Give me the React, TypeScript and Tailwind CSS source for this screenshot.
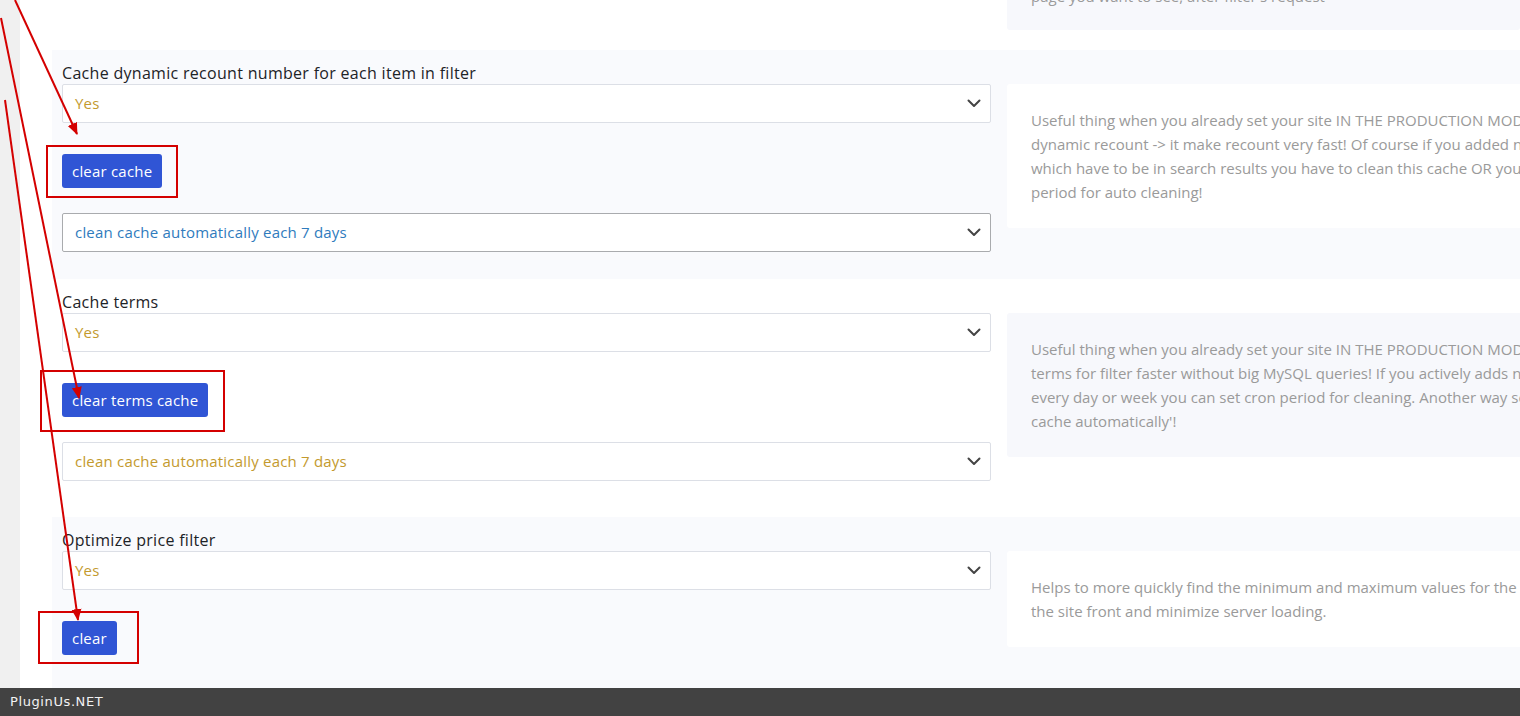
import React from 'react';

type Section = {
  label: string;
  button: string;
  cron?: { text: string; blue: boolean };
  desc: string[];
  light: boolean;
  descPad: string;
};

const sections: Section[] = [
  {
    label: 'Cache dynamic recount number for each item in filter',
    button: 'clear cache',
    cron: { text: 'clean cache automatically each 7 days', blue: true },
    desc: [
      'Useful thing when you already set your site IN THE PRODUCTION MODE - use it for caching of',
      'dynamic recount -> it make recount very fast! Of course if you added new products',
      'which have to be in search results you have to clean this cache OR you can set time',
      'period for auto cleaning!',
    ],
    light: true,
    descPad: 'pb-[27px]',
  },
  {
    label: 'Cache terms',
    button: 'clear terms cache',
    cron: { text: 'clean cache automatically each 7 days', blue: false },
    desc: [
      'Useful thing when you already set your site IN THE PRODUCTION MODE - use it for getting',
      'terms for filter faster without big MySQL queries! If you actively adds new terms',
      "every day or week you can set cron period for cleaning. Another way set: 'not clean",
      "cache automatically'!",
    ],
    light: false,
    descPad: 'pb-[36px]',
  },
  {
    label: 'Optimize price filter',
    button: 'clear',
    desc: [
      'Helps to more quickly find the minimum and maximum values for the filter by price on',
      'the site front and minimize server loading.',
    ],
    light: true,
    descPad: 'pb-[33px]',
  },
];

function Chevron() {
  return (
    <svg width="14" height="9" viewBox="0 0 14 9" className="shrink-0">
      <polyline points="1.5,1.5 7,7 12.5,1.5" fill="none" stroke="#444" strokeWidth="2" strokeLinecap="round" strokeLinejoin="round" />
    </svg>
  );
}

function Select({ text, color, border }: { text: string; color: string; border: string }) {
  return (
    <div className={`flex h-[39px] w-[929px] items-center justify-between rounded-[2px] border bg-white pl-3 pr-[9px] ${border}`}>
      <span className={`text-[15px] tracking-[0.2px] ${color}`}>{text}</span>
      <Chevron />
    </div>
  );
}

function Row({ s }: { s: Section }) {
  return (
    <section className={`flex gap-4 pl-[10px] pt-[12px] ${s.descPad} ${s.light ? 'bg-[#f9fafd]' : 'bg-white'}`}>
      <div className="flex w-[929px] shrink-0 flex-col">
        <label className="h-[22px] text-[16px] leading-[22px] tracking-[0.3px] text-[#1d2327]">{s.label}</label>
        <Select text="Yes" color="text-[#c39a2e]" border="border-[#dcdfe6]" />
        <div className="mt-[31px]">
          <button className="h-[34px] rounded-[3px] bg-[#3055d5] px-[10px] text-[15px] tracking-[0.2px] text-white">{s.button}</button>
        </div>
        {s.cron && (
          <div className="mt-[25px]">
            <Select
              text={s.cron.text}
              color={s.cron.blue ? 'text-[#2f7bbd]' : 'text-[#c39a2e]'}
              border={s.cron.blue ? 'border-[#a9abae]' : 'border-[#dcdfe6]'}
            />
          </div>
        )}
      </div>
      <div className="mt-[22px] self-start">
        <div className={`w-[720px] rounded-[3px] px-6 py-6 text-[15px] leading-6 text-[#9a9a9a] ${s.light ? 'bg-white' : 'bg-[#f7f8fc]'}`}>
          {s.desc.map((l) => (
            <div key={l} className="whitespace-nowrap">{l}</div>
          ))}
        </div>
      </div>
    </section>
  );
}

export default function App() {
  return (
    <div className="relative h-[716px] w-[1520px] overflow-hidden bg-[#f0f0f0]" style={{ fontFamily: '"Open Sans", "Noto Sans", sans-serif' }}>
      <div className="ml-5 flex h-[688px] flex-col bg-white pl-8">
        {/* tail of previous option */}
        <div className="flex h-[52px] gap-4 pl-[10px]">
          <div className="w-[929px] shrink-0" />
          <div className="h-[30px] w-[720px] overflow-hidden rounded-b-[3px] bg-[#f7f8fc] px-6">
            <div className="-mt-[16px] whitespace-nowrap text-[15px] leading-6 text-[#9a9a9a]">page you want to see, after filter's request</div>
          </div>
        </div>
        {sections.map((s) => (
          <Row key={s.label} s={s} />
        ))}
        <div className="flex-1 bg-[#f9fafd]" />
      </div>
      <footer className="flex h-7 items-center bg-[#424242] px-[10px] text-[13px] tracking-[0.6px] text-[#f2f2f2]" style={{ fontFamily: '"DejaVu Sans", sans-serif' }}>
        PluginUs.NET
      </footer>

      {/* annotation overlay */}
      <svg className="pointer-events-none absolute left-0 top-0" width="1520" height="716">
        <defs>
          <marker id="ah" markerWidth="12" markerHeight="12" refX="11" refY="6" orient="auto" markerUnits="userSpaceOnUse">
            <path d="M0,1 L12,6 L0,11 z" fill="#d40000" />
          </marker>
        </defs>
        <g stroke="#d40000" strokeWidth="2" fill="none">
          <line x1="15" y1="0" x2="77" y2="134" markerEnd="url(#ah)" />
          <line x1="1" y1="18" x2="79" y2="398" markerEnd="url(#ah)" />
          <line x1="5" y1="100" x2="78" y2="620" markerEnd="url(#ah)" />
          <rect x="47" y="146" width="130" height="51" />
          <rect x="41" y="371" width="183" height="60" />
          <rect x="39" y="612" width="99" height="51" />
        </g>
      </svg>
    </div>
  );
}
